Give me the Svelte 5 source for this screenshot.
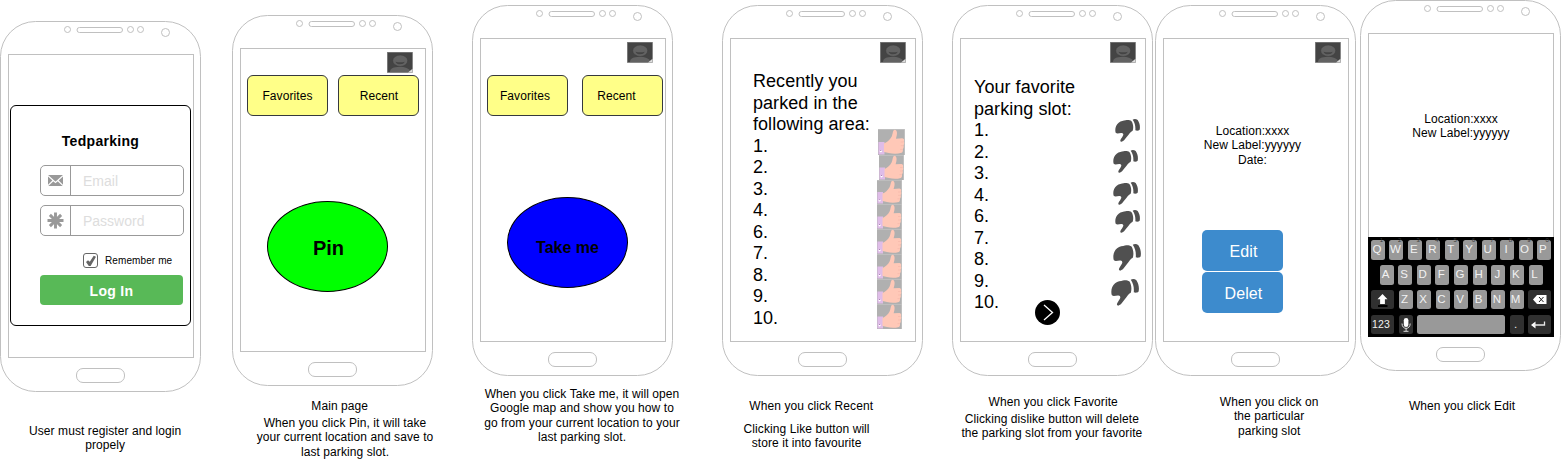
<script>
  const notes = [
    { x: 105.2, y: 424, lines: ['User must register and login', 'propely'] },
    { x: 339.7, y: 399, lines: ['Main page'] },
    { x: 345, y: 416, lines: ['When you click Pin, it will take', 'your current location and save to', 'last parking slot.'] },
    { x: 582, y: 387, lines: ['When you click Take me, it will open', 'Google map and show you how to', 'go from your current location to your', 'last parking slot.'] },
    { x: 811.2, y: 399, lines: ['When you click Recent'] },
    { x: 806.6, y: 422, lines: ['Clicking Like button will', 'store it into favourite'] },
    { x: 1053.2, y: 395, lines: ['When you click Favorite'] },
    { x: 1051.9, y: 412, lines: ['Clicking dislike button will delete', 'the parking slot from your favorite'] },
    { x: 1269.2, y: 395, lines: ['When you click on', 'the particular', 'parking slot'] },
    { x: 1462, y: 399, lines: ['When you click Edit'] }
  ];
  const recent = ['Recently you', 'parked in the', 'following area:', '1.', '2.', '3.', '4.', '6.', '7.', '8.', '9.', '10.'];
  const favorite = ['Your favorite', 'parking slot:', '1.', '2.', '3.', '4.', '6.', '7.', '8.', '9.', '10.'];
  const likes = [
    { x: 1, w: 27, h: 26 },
    { x: 2, w: 25, h: 25 },
    { x: 0, w: 25, h: 24 },
    { x: 0, w: 25, h: 25 },
    { x: 0, w: 25, h: 25 },
    { x: 0, w: 25, h: 25 },
    { x: 0, w: 25, h: 25 },
    { x: 0, w: 25, h: 25 }
  ];
  const dislikes = [
    { x: 4, gap: 0, w: 25, h: 23 },
    { x: 2, gap: 8, w: 25, h: 23 },
    { x: 2, gap: 9, w: 25, h: 23 },
    { x: 4, gap: 5, w: 25, h: 23 },
    { x: 2, gap: 11, w: 28, h: 27 },
    { x: 0, gap: 8, w: 28, h: 27 }
  ];
  const row1 = 'QWERTYUIOP'.split('');
  const row2 = 'ASDFGHJKL'.split('');
  const row3 = 'ZXCVBNM'.split('');
</script>

{#snippet phone(x, y, screen)}
  <section class="phone" style="left:{x}px;top:{y}px">
    <svg class="frame" width="201" height="371" viewBox="0 0 201 371" fill="none" stroke="#c0c0c0">
      <rect x=".5" y=".5" width="200" height="370" rx="35" ry="35" fill="#fff" />
      <rect x="77" y="6.5" width="45.5" height="5" rx="2.5" />
      <circle cx="67.5" cy="8.5" r="3" />
      <circle cx="130.5" cy="8.5" r="3" />
      <circle cx="140.5" cy="8.5" r="3" />
      <circle cx="165.5" cy="11.5" r="4" />
      <rect x="76.5" y="347.5" width="48" height="14" rx="6.5" />
    </svg>
    <div class="screen">{@render screen()}</div>
  </section>
{/snippet}

{#snippet avatar(ml)}
  <svg class="avatar" style="margin-left:{ml}px" width="26" height="21" viewBox="0 0 26 21">
    <rect x=".3" y=".2" width="25.2" height="20.3" fill="#444" stroke="#777" stroke-width=".6" />
    <path d="M3 20c0-4 4-5 9-5.300 6 0 10.500 1.500 11.500 5.300z" fill="#626262" />
    <ellipse cx="13.200" cy="8.700" rx="7.500" ry="5.700" fill="#626262" stroke="#3c3c3c" stroke-width=".5" />
    <path d="M8.500 9.700q4.700 1 9.400 0q-1.200 2.600-4.700 2.600t-4.700-2.600z" fill="#444" />
    <path d="M25.500 16.800v3.700h-4.500z" fill="#ddd" />
  </svg>
{/snippet}

{#snippet login()}
  <div class="card">
    <h1>Tedparking</h1>
    <div class="field">
      <span class="ico">
        <svg width="15" height="11" viewBox="0 0 15 11"><rect width="15" height="11" rx="1" fill="#999" /><path d="M0 .8l7.500 6.700L15 .8M0 10.500l5.200-5M15 10.500l-5.200-5" fill="none" stroke="#fff" stroke-width="1.200" /></svg>
      </span>
      <span class="ph">Email</span>
    </div>
    <div class="field">
      <span class="ico">
        <svg width="17" height="17" viewBox="-8.500 -8.500 17 17" stroke="#999" stroke-width="2.900"><path d="M0-8V8M-8 0H8M-5.600-5.600L5.600 5.600M5.600-5.600L-5.600 5.600" /></svg>
      </span>
      <span class="ph">Password</span>
    </div>
    <div class="remember">
      <span class="box"><svg width="13" height="13" viewBox="0 0 13 13"><path d="M2 8l2-1.700 1.800 1.500L9.700 1.700l2.300 1L6.600 12H4.800z" fill="#666" /></svg></span>
      <span>Remember me</span>
    </div>
    <div class="submit">Log In</div>
  </div>
{/snippet}

{#snippet main()}
  {@render avatar(146)}
  <div class="tabs a"><div class="tab">Favorites</div><div class="tab">Recent</div></div>
  <div class="oval green">Pin</div>
{/snippet}

{#snippet take()}
  {@render avatar(146)}
  <div class="tabs b"><div class="tab">Favorites</div><div class="tab">Recent</div></div>
  <div class="oval blue">Take me</div>
{/snippet}

{#snippet recents()}
  {@render avatar(149)}
  <div class="split r">
    <div class="list">{#each recent as t}<div>{t}</div>{/each}</div>
    <div class="likes">
      {#each likes as l}
        <svg style="margin-left:{l.x}px" width={l.w} height={l.h} viewBox="0 0 25 25" preserveAspectRatio="none">
          <rect width="25" height="25" fill="#b0b0b0" />
          <path d="M0 .3H25M24.700 0V25" stroke="#c6c6c6" stroke-width=".8" />
          <rect x=".4" y="12.500" width="5.600" height="12" fill="#dfbce8" />
          <path d="M5.500 14C8 13.300 11 10.500 12.600 7.500C13.800 5 13.600 1 15.500 .8C17.800 .9 18.300 4.500 16.600 9.300L22.500 8.900C24.300 9.100 24.500 11 23.900 12C24.600 13.200 24.400 14.700 23.600 15.500C24.100 17 23.900 18.500 23 19.400C23.300 21 22.800 22.500 21.800 22.900C18 24 14 24 10 23L5.500 22z" fill="#ffc8b7" />
          <path d="M21 12.500h2.500M21 16h2.500M20.500 19.600h2.300" stroke="#f3b3a5" stroke-width=".5" />
          <circle cx="2.600" cy="21.300" r="1.100" fill="#fff" /><circle cx="2.600" cy="20.600" r=".5" fill="#915f9e" />
        </svg>
      {/each}
    </div>
  </div>
{/snippet}

{#snippet favorites()}
  {@render avatar(149)}
  <div class="split f">
    <div class="list">{#each favorite as t}<div>{t}</div>{/each}</div>
    <div class="dislikes">
      {#each dislikes as d}
        <svg style="margin:{d.gap}px 0 0 {d.x}px" width={d.w} height={d.h} viewBox="0 0 75 69" preserveAspectRatio="none" fill="#505050">
          <path d="M11 11C18 5 26 6 32 4C39 2 45 4 49 6C55 14 56 26 53 35C47 37 42 46 37 52C31 58 26 69 18 68C12 66 20 58 23 52C26 47 26 43 20 42C14 41 7 46 2 41C-1 30 2 18 11 11Z" />
          <path d="M53 2C58-1 64 0 68 3C74 12 76 22 74 32C71 35 66 36 61 34C62 22 60 12 53 2Z" />
        </svg>
      {/each}
    </div>
  </div>
  <svg class="next" width="25" height="25" viewBox="0 0 25 25"><circle cx="12.500" cy="12.500" r="12.500" /><path d="M9 5l8.500 7.500L9 20" fill="none" stroke="#fff" stroke-width="1.300" /></svg>
{/snippet}

{#snippet detail()}
  {@render avatar(151)}
  <div class="info d"><div>Location:xxxx</div><div>New Label:yyyyyy</div><div>Date:</div></div>
  <div class="actions"><div class="btn">Edit</div><div class="btn">Delet</div></div>
{/snippet}

{#snippet edit()}
  <div class="info e"><div>Location:xxxx</div><div>New Label:yyyyyy</div></div>
  <div class="keyboard">
    <div class="keys">{#each row1 as k, i}<span class="key"><i>{(i + 1) % 10}</i>{k}</span>{/each}</div>
    <div class="keys inset">{#each row2 as k}<span class="key">{k}</span>{/each}</div>
    <div class="keys">
      <span class="key dark wide"><svg width="23" height="19" viewBox="0 0 23 19"><path d="M11.500 4l5 5.300h-2.600v4.700h-4.800V9.300H6.500z" fill="#fff" /><path d="M7 16h9.500" stroke="#000" stroke-width="2" /></svg></span>
      {#each row3 as k}<span class="key">{k}</span>{/each}
      <span class="key dark wide"><svg width="23" height="19" viewBox="0 0 23 19"><path d="M5 9.500L9 5h9.500v9H9z" fill="#fff" /><path d="M11 7l4.500 5M15.500 7L11 12" stroke="#222" /></svg></span>
    </div>
    <div class="keys">
      <span class="key dark wide num">123</span>
      <span class="key dark"><svg width="14" height="19" viewBox="0 0 14 19"><rect x="4.800" y="3" width="4.600" height="9" rx="2.300" fill="#fff" /><path d="M3 8.500c0 6.500 8.200 6.500 8.200 0M7.100 13.200v3M4.500 16.300h5" fill="none" stroke="#ddd" /></svg></span>
      <span class="key space"></span>
      <span class="key dark">.</span>
      <span class="key dark wide"><svg width="23" height="19" viewBox="0 0 23 19"><path d="M3 10l4.500-3.400v6.800z" fill="#fff" /><path d="M6 10h10.500V6.500" fill="none" stroke="#e8e8e8" stroke-width="1.300" /></svg></span>
    </div>
  </div>
{/snippet}

<main class="canvas">
  {@render phone(0, 21, login)}
  {@render phone(232, 15, main)}
  {@render phone(472, 5, take)}
  {@render phone(722, 5, recents)}
  {@render phone(952, 5, favorites)}
  {@render phone(1155, 5, detail)}
  {@render phone(1360, 0, edit)}
  {#each notes as n}
    <div class="note" style="left:{n.x}px;top:{n.y}px">{#each n.lines as l}<div>{l}</div>{/each}</div>
  {/each}
</main>

<style>
  :global(body) { margin: 0; background: #fff; overflow: hidden; }
  .canvas { position: relative; width: 1561px; height: 460px; overflow: hidden; font: 12px/14.4px 'Liberation Sans', Arial, sans-serif; color: #000; }
  .canvas * { box-sizing: border-box; }
  svg { display: block; flex: none; }
  .phone { position: absolute; width: 201px; height: 371px; padding: 33px 7px 0 8px; }
  .frame { position: absolute; left: 0; top: 0; }
  .screen { position: relative; width: 186px; height: 304px; border: 1px solid #c0c0c0; display: flex; flex-direction: column; align-items: flex-start; white-space: nowrap; }
  .note { position: absolute; transform: translateX(-50%); white-space: nowrap; text-align: center; letter-spacing: .08px; }
  .avatar { margin-top: 3px; }

  .card { width: 181px; height: 221px; margin: 50px 0 0 1px; border: 1px solid #000; border-radius: 6px; padding: 27px 7px 0 29px; background: #fff; }
  h1 { margin: 0 0 15px -9px; width: 139px; font-size: 14px; line-height: 17px; font-weight: 700; text-align: center; letter-spacing: .3px; }
  .field { display: flex; width: 144px; height: 31px; margin-bottom: 9px; border: 1px solid #999; border-radius: 5px; font-size: 14px; line-height: 31px; color: #ddd; }
  .ico { width: 30px; border-right: 1px solid #999; display: flex; align-items: center; justify-content: center; }
  .ph { padding-left: 12px; }
  .remember { display: flex; align-items: center; gap: 7px; height: 15px; margin: 17px 0 7px 43px; font-size: 10px; line-height: 16px; letter-spacing: .1px; }
  .box { width: 15px; height: 15px; border: 1px solid #666; border-radius: 3px; }
  .submit { width: 143px; height: 30px; border-radius: 4px; background: #58b957; color: #fff; font-size: 14px; font-weight: 700; line-height: 32px; text-align: center; letter-spacing: .3px; }

  .tabs { display: flex; }
  .tabs.a { gap: 10px; margin: 2px 0 0 6px; }
  .tabs.b { gap: 14px; margin: 12px 0 0 6px; }
  .tab { width: 81px; height: 41px; background: #ff8; border: 1px solid #36393d; border-radius: 6px; line-height: 40px; text-align: center; letter-spacing: .08px; }
  .a .tab:last-child { padding-left: 1px; }
  .b .tab { padding-right: 5px; }
  .b .tab:last-child { padding-right: 12px; }
  .oval { width: 121px; height: 91px; border: 1px solid #000; border-radius: 50%; font-weight: 700; text-align: center; }
  .green { margin: 85px 0 0 26px; background: #0f0; font-size: 20px; line-height: 92px; padding-left: 2px; }
  .blue { margin: 81px 0 0 26px; background: #00f; font-size: 16px; line-height: 99px; }

  .split { display: flex; align-items: flex-start; }
  .list { font-size: 18px; line-height: 21.5px; letter-spacing: .05px; }
  .split.r { margin: 8px 0 0 22px; }
  .r .list { width: 124px; }
  .split.f { margin: 14px 0 0 13px; }
  .f .list { width: 137px; }
  .likes { padding-top: 58px; }
  .dislikes { padding-top: 42px; }
  .next { position: absolute; left: 74px; top: 261px; }

  .info { text-align: center; letter-spacing: .08px; }
  .info.d { width: 177px; margin-top: 61px; }
  .info.e { width: 184px; margin-top: 78px; }
  .actions { display: flex; flex-direction: column; gap: 1px; margin: 63px 0 0 38px; }
  .btn { width: 81px; height: 41px; border-radius: 5px; background: #3d8bcd; color: #fff; font-size: 16px; line-height: 43px; text-align: center; padding-left: 2px; letter-spacing: .1px; }

  .keyboard { width: 186px; height: 101px; margin: 96px -1px -1px -1px; padding: 3.300px 3px 3px; background: #000; display: flex; flex-direction: column; gap: 5.400px; }
  .keys { display: flex; justify-content: space-between; height: 19.500px; }
  .inset { padding: 0 8.500px; }
  .key { position: relative; width: 14px; height: 19.500px; background: #999; border-radius: 2.500px; color: #f2f2f2; font-size: 11.500px; line-height: 18px; text-align: center; padding-right: 2px; }
  .key:has(svg) { padding: 0; }
  .key i { position: absolute; right: 2px; top: -3px; font-size: 6px; line-height: 7px; font-style: normal; color: #333; }
  .dark { background: #303030; }
  .wide { width: 23px; }
  .num { font-size: 10.500px; letter-spacing: .2px; line-height: 19px; padding-right: 3px; }
  .space { width: 88px; }
</style>
